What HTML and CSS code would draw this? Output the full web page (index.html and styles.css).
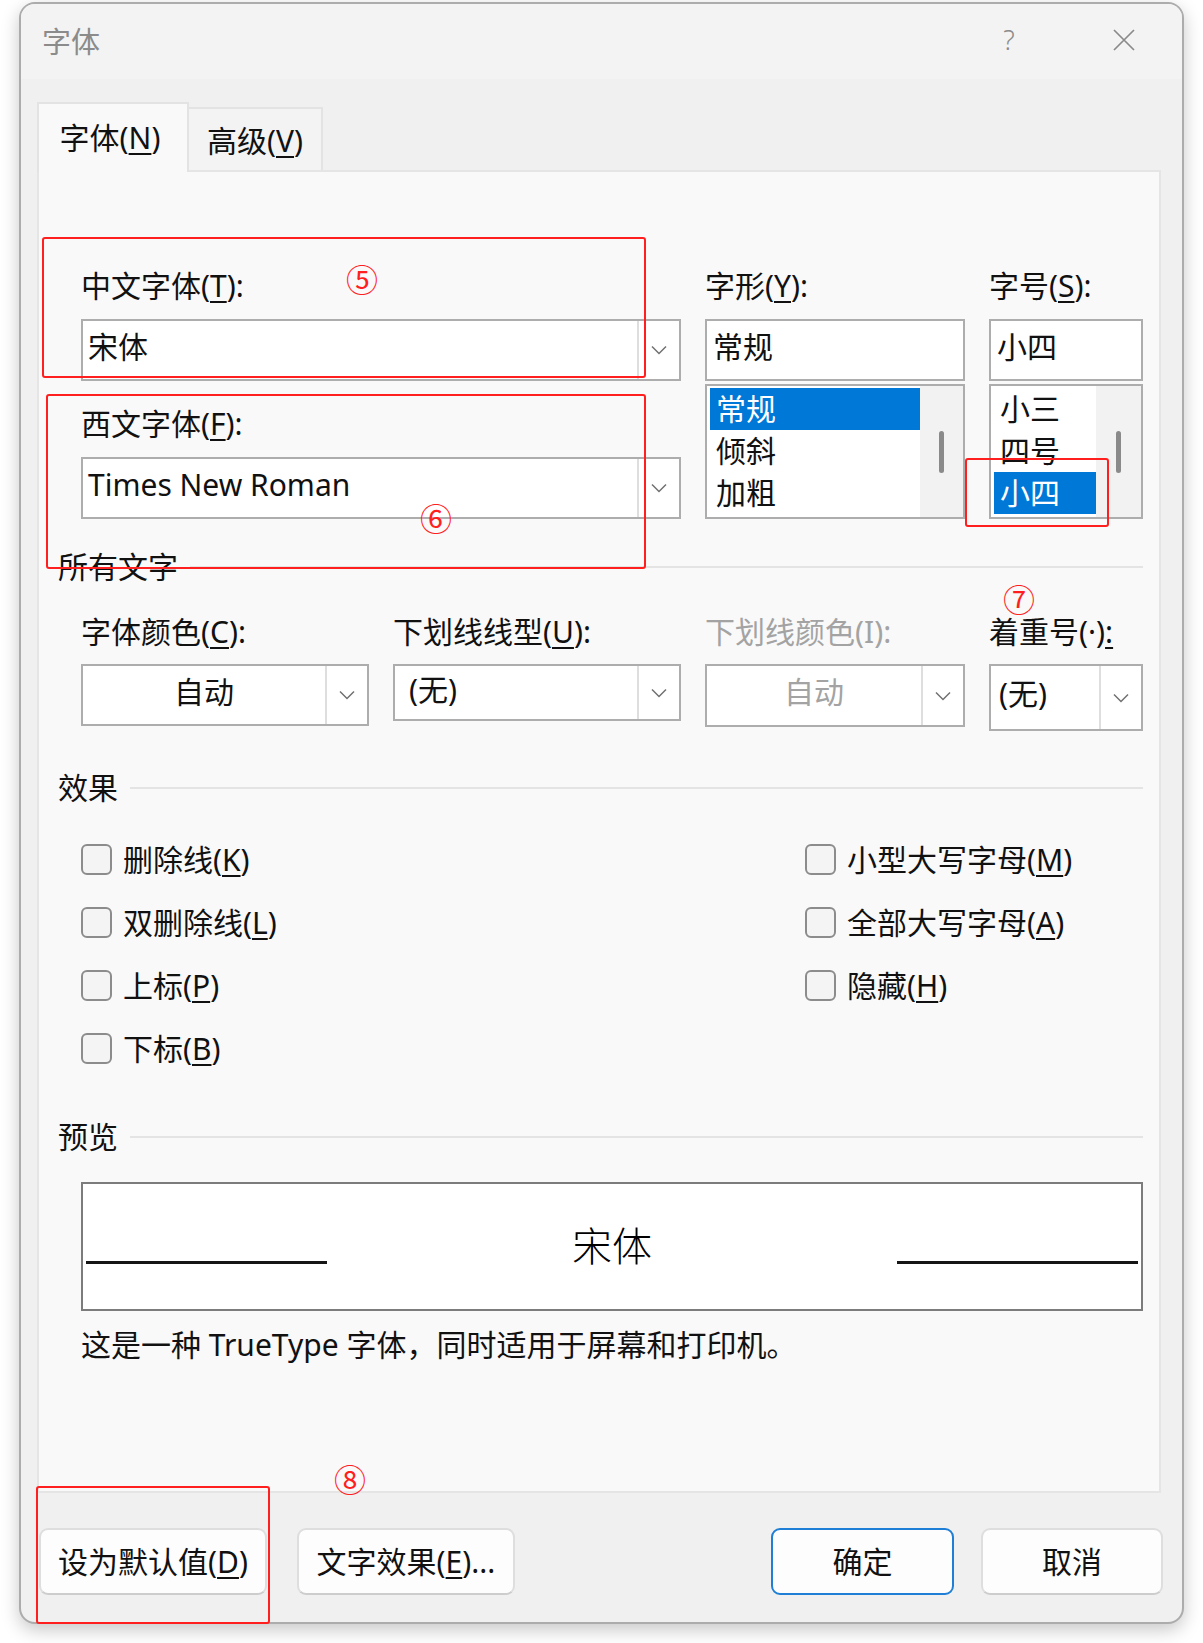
FILE: index.html
```html
<!DOCTYPE html>
<html lang="zh-CN">
<head>
<meta charset="utf-8">
<title>字体</title>
<link rel="stylesheet" href="styles.css">
</head>
<body>
<div class="stage">
  <div class="window">
    <div class="titlebar">
      <span class="title">字体</span>
      <span class="tb-btn help">?</span>
      <span class="tb-btn close"><svg width="22" height="22" viewBox="0 0 22 22"><path d="M1 1L21 21M21 1L1 21" stroke="#8a8a8a" stroke-width="1.7" fill="none"/></svg></span>
    </div>
    <div class="body">
      <div class="tabs">
        <div class="tab active">字体(<u>N</u>)</div>
        <div class="tab">高级(<u>V</u>)</div>
      </div>
      <div class="panel">
        <div class="top-grid">
          <div class="col">
            <div class="label">中文字体(<u>T</u>):</div>
            <div class="combo"><span class="combo-text">宋体</span><span class="drop"><svg width="16" height="10" viewBox="0 0 16 10"><polyline points="1,1.5 8,8.5 15,1.5" fill="none" stroke="#707070" stroke-width="1.5"/></svg></span></div>
            <div class="label second">西文字体(<u>F</u>):</div>
            <div class="combo"><span class="combo-text">Times New Roman</span><span class="drop"><svg width="16" height="10" viewBox="0 0 16 10"><polyline points="1,1.5 8,8.5 15,1.5" fill="none" stroke="#707070" stroke-width="1.5"/></svg></span></div>
          </div>
          <div class="col">
            <div class="label">字形(<u>Y</u>):</div>
            <div class="input">常规</div>
            <div class="listbox">
              <div class="items">
                <div class="item sel">常规</div>
                <div class="item">倾斜</div>
                <div class="item">加粗</div>
              </div>
              <div class="track"><span class="thumb"></span></div>
            </div>
          </div>
          <div class="col">
            <div class="label">字号(<u>S</u>):</div>
            <div class="input">小四</div>
            <div class="listbox">
              <div class="items">
                <div class="item">小三</div>
                <div class="item">四号</div>
                <div class="item sel">小四</div>
              </div>
              <div class="track wide"><span class="thumb"></span></div>
            </div>
          </div>
        </div>

        <div class="group-head first">所有文字</div>

        <div class="row2">
          <div class="field">
            <div class="label">字体颜色(<u>C</u>):</div>
            <div class="combo h62"><span class="combo-text center">自动</span><span class="drop"><svg width="16" height="10" viewBox="0 0 16 10"><polyline points="1,1.5 8,8.5 15,1.5" fill="none" stroke="#707070" stroke-width="1.5"/></svg></span></div>
          </div>
          <div class="field">
            <div class="label">下划线线型(<u>U</u>):</div>
            <div class="combo h57"><span class="combo-text pad14">(无)</span><span class="drop"><svg width="16" height="10" viewBox="0 0 16 10"><polyline points="1,1.5 8,8.5 15,1.5" fill="none" stroke="#707070" stroke-width="1.5"/></svg></span></div>
          </div>
          <div class="field">
            <div class="label disabled">下划线颜色(I):</div>
            <div class="combo h63"><span class="combo-text center disabled">自动</span><span class="drop"><svg width="16" height="10" viewBox="0 0 16 10"><polyline points="1,1.5 8,8.5 15,1.5" fill="none" stroke="#707070" stroke-width="1.5"/></svg></span></div>
          </div>
          <div class="field">
            <div class="label">着重号(·)<u>:</u></div>
            <div class="combo h67"><span class="combo-text pad8">(无)</span><span class="drop"><svg width="16" height="10" viewBox="0 0 16 10"><polyline points="1,1.5 8,8.5 15,1.5" fill="none" stroke="#707070" stroke-width="1.5"/></svg></span></div>
          </div>
        </div>

        <div class="group-head">效果</div>

        <div class="effects">
          <div class="fx-col left">
            <div class="check-row"><span class="box"></span><span>删除线(<u>K</u>)</span></div>
            <div class="check-row"><span class="box"></span><span>双删除线(<u>L</u>)</span></div>
            <div class="check-row"><span class="box"></span><span>上标(<u>P</u>)</span></div>
            <div class="check-row"><span class="box"></span><span>下标(<u>B</u>)</span></div>
          </div>
          <div class="fx-col">
            <div class="check-row"><span class="box"></span><span>小型大写字母(<u>M</u>)</span></div>
            <div class="check-row"><span class="box"></span><span>全部大写字母(<u>A</u>)</span></div>
            <div class="check-row"><span class="box"></span><span>隐藏(<u>H</u>)</span></div>
          </div>
        </div>

        <div class="group-head">预览</div>

        <div class="preview">
          <span class="pline"></span>
          <span class="ptext">宋体</span>
          <span class="pline"></span>
        </div>
        <div class="desc">这是一种 TrueType 字体，同时适用于屏幕和打印机。</div>
      </div>

      <div class="footer">
        <div class="btn b1">设为默认值(<u>D</u>)</div>
        <div class="btn b2">文字效果(<u>E</u>)...</div>
        <div class="btn b3 primary">确定</div>
        <div class="btn b4">取消</div>
      </div>
    </div>
  </div>

  <div class="mark m5"></div>
  <div class="mark m6"></div>
  <div class="mark m7"></div>
  <div class="mark m8"></div>
  <span class="num n5">⑤</span>
  <span class="num n6">⑥</span>
  <span class="num n7">⑦</span>
  <span class="num n8">⑧</span>
</div>
</body>
</html>
```

FILE: styles.css
```css
* { box-sizing: border-box; }
html, body { margin: 0; padding: 0; background: #ffffff; }
body {
  font-family: "Noto Sans", "Noto Sans CJK SC", sans-serif;
  font-size: 30px;
  color: #111111;
  width: 1203px;
  height: 1643px;
  overflow: hidden;
}
u { text-decoration-thickness: 2px; text-underline-offset: 4px; }

.stage { position: relative; width: 1203px; height: 1643px; padding: 2px 0 0 19px; }

.window {
  width: 1165px;
  height: 1622px;
  border: 2px solid #acacac;
  border-radius: 16px;
  background: #f0f0f0;
  box-shadow: 0 6px 18px rgba(0, 0, 0, 0.22);
  overflow: hidden;
  display: flex;
  flex-direction: column;
}

.titlebar {
  height: 75px;
  flex: none;
  background: #f3f3f3;
  display: flex;
  align-items: center;
  padding: 0 38px 4px 21px;
}
.title { font-size: 29px; line-height: 40px; color: #8b8b8b; font-family: "Noto Sans CJK SC", sans-serif; }
.tb-btn { width: 40px; height: 40px; display: flex; align-items: center; justify-content: center; color: #8b8b8b; flex: none; }
.help { margin-left: auto; font-size: 27px; font-weight: 300; line-height: 40px; }
.close { margin-left: 75px; }

.body { flex: 1; padding: 23px 21px 0 16px; display: flex; flex-direction: column; }

.tabs { display: flex; align-items: flex-end; height: 68px; flex: none; }
.tab {
  width: 134px;
  height: 63px;
  border: 2px solid #e3e3e3;
  border-left: none;
  border-bottom: none;
  background: #f3f3f3;
  text-align: center;
  padding-top: 12px;
  line-height: 40px;
  white-space: nowrap;
}
.tab.active {
  width: 152px;
  height: 70px;
  margin-bottom: -2px;
  border-left: 2px solid #e3e3e3;
  background: #f9f9f9;
  position: relative;
  z-index: 1;
  padding: 14px 6px 0 0;
}

.panel {
  height: 1323px;
  flex: none;
  border: 2px solid #e5e5e5;
  background: #f9f9f9;
  padding: 94px 16px 0 19px;
}

.top-grid {
  margin-left: 23px;
  display: grid;
  grid-template-columns: 600px 260px 154px;
  column-gap: 24px;
}
.col { display: flex; flex-direction: column; }
.label { height: 40px; line-height: 40px; white-space: nowrap; }
.label.second { margin-top: 23px; }
.disabled { color: #a3a3a3; }

.combo {
  margin-top: 13px;
  height: 62px;
  background: #fff;
  border: 2px solid #adadad;
  display: flex;
}
.combo-text { flex: 1; padding-left: 5px; line-height: 52px; white-space: nowrap; overflow: hidden; }
.combo-text.center { text-align: center; padding-left: 0; }
.combo-text.pad14 { padding-left: 14px; }
.combo-text.pad8 { padding-left: 8px; }
.drop {
  width: 42px;
  flex: none;
  border-left: 2px solid #dedede;
  display: flex;
  align-items: center;
  justify-content: center;
}

.input {
  margin-top: 13px;
  height: 62px;
  background: #fff;
  border: 2px solid #adadad;
  padding-left: 6px;
  line-height: 52px;
}
.listbox {
  margin-top: 3px;
  height: 135px;
  background: #fff;
  border: 2px solid #adadad;
  display: flex;
}
.items { flex: 1; padding: 2px 0 0 3px; }
.item { height: 42px; line-height: 42px; padding-left: 6px; white-space: nowrap; }
.item.sel { background: #0078d7; color: #fff; }
.track { width: 43px; flex: none; background: #f2f2f2; display: flex; justify-content: center; padding-top: 45px; }
.track.wide { width: 45px; }
.thumb { width: 5px; height: 42px; border-radius: 3px; background: #8a8a8a; }

.group-head {
  display: flex;
  align-items: center;
  gap: 12px;
  height: 40px;
  line-height: 40px;
  margin-top: 37px;
  white-space: nowrap;
}
.group-head.first { margin-top: 28px; }
.group-head::after { content: ""; flex: 1; height: 2px; background: #e4e4e4; }

.row2 {
  margin: 25px 0 0 23px;
  display: grid;
  grid-template-columns: 288px 288px 260px 154px;
  column-gap: 24px;
  align-items: start;
}
.field { display: flex; flex-direction: column; }
.field .combo { margin-top: 12px; }
.combo.h57 { height: 57px; }
.combo.h57 .combo-text { line-height: 48px; }
.combo.h63 { height: 63px; }
.combo.h67 { height: 67px; }
.combo.h67 .combo-text { line-height: 56px; }

.effects { margin: 20px 0 0 23px; display: flex; }
.fx-col { display: flex; flex-direction: column; }
.fx-col.left { width: 724px; }
.check-row { height: 63px; display: flex; align-items: center; gap: 11px; line-height: 40px; white-space: nowrap; }
.box { width: 31px; height: 31px; flex: none; border: 2px solid #8c8c8c; border-radius: 6px; background: #f4f4f4; }

.preview {
  margin: 25px 0 0 23px;
  height: 129px;
  background: #fff;
  border: 2px solid #7c7c7c;
  display: grid;
  grid-template-columns: 241px 1fr 241px;
  padding: 0 3px;
}
.pline { height: 3px; background: #161616; margin-top: 77px; }
.ptext {
  text-align: center;
  font-family: "Noto Sans CJK SC", sans-serif;
  font-weight: 300;
  font-size: 40px;
  line-height: 40px;
  margin-top: 40px;
  color: #000;
}
.desc { margin: 14px 0 0 23px; line-height: 40px; white-space: nowrap; }

.footer { display: flex; margin: 35px -2px 0 2px; height: 67px; flex: none; }
.btn {
  height: 67px;
  border-radius: 9px;
  background: #fdfdfd;
  border: 2px solid #dedede;
  border-bottom-color: #cdcdcd;
  display: flex;
  align-items: center;
  justify-content: center;
  line-height: 40px;
  white-space: nowrap;
}
.b1 { width: 228px; }
.b2 { width: 218px; margin-left: 30px; }
.b3 { width: 183px; margin-left: auto; }
.b4 { width: 182px; margin-left: 27px; }
.btn.primary { border: 2px solid #1f7fd6; }

.mark { position: absolute; border: 2px solid #ff1f1f; border-radius: 3px; }
.m5 { left: 42px; top: 237px; width: 604px; height: 141px; }
.m6 { left: 46px; top: 394px; width: 600px; height: 175px; }
.m7 { left: 965px; top: 458px; width: 144px; height: 69px; }
.m8 { left: 36px; top: 1486px; width: 234px; height: 138px; }

.num {
  position: absolute;
  width: 40px;
  height: 32px;
  line-height: 32px;
  text-align: center;
  color: #ff1f1f;
  font-family: "Noto Sans CJK SC", sans-serif;
  font-size: 32px;
}
.n5 { left: 342px; top: 262px; }
.n6 { left: 416px; top: 501px; }
.n7 { left: 999px; top: 582px; }
.n8 { left: 330px; top: 1462px; }
```
